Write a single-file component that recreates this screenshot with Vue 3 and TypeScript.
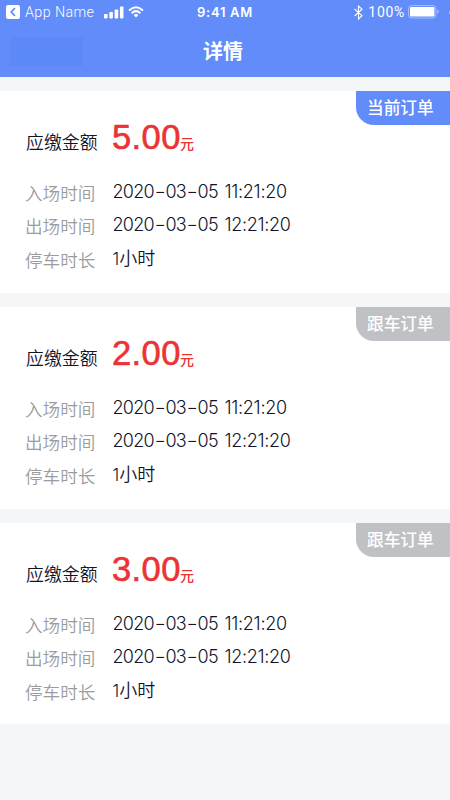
<script setup lang="ts">
interface Stamp {
  date: string[]
  time: string
}

interface Order {
  id: number
  tag: string
  current: boolean
  amount: string
  entry: Stamp
  exit: Stamp
  hours: number
}

const entry: Stamp = { date: ['2020', '03', '05'], time: '11:21:20' }
const exit: Stamp = { date: ['2020', '03', '05'], time: '12:21:20' }

const orders: Order[] = [
  { id: 1, tag: '当前订单', current: true, amount: '5.00', entry, exit, hours: 1 },
  { id: 2, tag: '跟车订单', current: false, amount: '2.00', entry, exit, hours: 1 },
  { id: 3, tag: '跟车订单', current: false, amount: '3.00', entry, exit, hours: 1 },
]
</script>

<template>
  <div class="page">
    <header class="header">
      <div class="status">
        <div class="status-left">
          <svg class="back" viewBox="0 0 14 14" width="14" height="14">
            <path fill-rule="evenodd" d="M2 0H12Q14 0 14 2V12Q14 14 12 14H2Q0 14 0 12V2Q0 0 2 0ZM8.4 2.6L4 7L8.4 11.4L9.6 10.3L6.3 7L9.6 3.7Z" fill="#fff" />
          </svg>
          <span class="app-name">App Name</span>
          <svg class="signal" viewBox="0 0 20 13" width="20" height="13" fill="#fff">
            <rect x="0" y="8" width="3.6" height="4.4" rx="0.8" />
            <rect x="5.3" y="6" width="3.6" height="6.4" rx="0.8" />
            <rect x="10.6" y="3.4" width="3.6" height="9" rx="0.8" />
            <rect x="15.9" y="0.6" width="3.6" height="11.8" rx="0.8" />
          </svg>
          <svg class="wifi" viewBox="0 0 16 12" width="16" height="12" fill="none" stroke="#fff" stroke-width="2">
            <path d="M1 4.4Q8 -2 15 4.4" />
            <path d="M3.6 7.2Q8 3.1 12.4 7.2" />
            <path d="M5.6 9Q8 7 10.4 9L8 11.5Z" fill="#fff" stroke="none" />
          </svg>
        </div>
        <span class="clock">9:41 AM</span>
        <div class="status-right">
          <svg class="bluetooth" viewBox="0 0 9 15" width="9" height="15" fill="none" stroke="#fff" stroke-width="1.1">
            <path d="M0.6 4L8 10.7L4.5 14V1L8 4.2L0.6 11" />
          </svg>
          <span class="percent">100%</span>
          <svg class="battery" viewBox="0 0 32 14" width="32" height="14">
            <rect x="0.6" y="0.6" width="27.2" height="12.4" rx="3" fill="none" stroke="#fff" stroke-opacity="0.45" />
            <rect x="2" y="2" width="24.4" height="9.6" rx="1.3" fill="#fff" />
            <path d="M29.2 4.6Q32.4 6.8 29.2 9Z" fill="#fff" fill-opacity="0.5" />
          </svg>
          <span class="edge-dot"></span>
        </div>
      </div>
      <div class="nav">
        <span class="nav-back"></span>
        <h1 class="title">详情</h1>
      </div>
    </header>

    <main class="orders">
      <section v-for="order in orders" :key="order.id" class="card">
        <span class="tag" :class="{ current: order.current }">{{ order.tag }}</span>
        <div class="amount-row">
          <span class="amount-label">应缴金额</span>
          <span class="amount">{{ order.amount }}</span>
          <span class="unit">元</span>
        </div>
        <div class="row">
          <span class="label">入场时间</span>
          <span class="date"><template v-for="(part, i) in order.entry.date" :key="i"><span v-if="i > 0" class="dash">-</span>{{ part }}</template></span>
          <span class="time">{{ order.entry.time }}</span>
        </div>
        <div class="row">
          <span class="label">出场时间</span>
          <span class="date"><template v-for="(part, i) in order.exit.date" :key="i"><span v-if="i > 0" class="dash">-</span>{{ part }}</template></span>
          <span class="time">{{ order.exit.time }}</span>
        </div>
        <div class="row">
          <span class="label">停车时长</span>
          <span class="duration"><span class="count">{{ order.hours }}</span>小时</span>
        </div>
      </section>
    </main>
  </div>
</template>

<style>
body {
  background: #f4f6f8;
}
</style>

<style scoped>
.page {
  width: 450px;
  height: 800px;
  overflow: hidden;
  background: #f4f6f8;
  color: #10142a;
  font-family: Inter, "Noto Sans CJK SC", sans-serif;
}

.header {
  height: 77px;
  background: #618cfa;
  color: #fff;
}

.status {
  display: grid;
  grid-template-columns: 1fr auto 1fr;
  align-items: center;
  height: 24px;
  padding: 0 0 0 6px;
  font-size: 14px;
  line-height: 24px;
}

.status-left,
.status-right {
  display: flex;
  align-items: center;
}

.status-right {
  justify-content: flex-end;
}

.app-name {
  margin-left: 5px;
  width: 79px;
  font-family: Roboto, sans-serif;
  font-weight: 300;
  font-size: 14.3px;
  letter-spacing: 0.4px;
  white-space: nowrap;
}

.wifi {
  margin-left: 4px;
}

.clock {
  margin-right: 6px;
  font-size: 13px;
  font-weight: 600;
  letter-spacing: 0.7px;
}

.percent {
  margin: 0 3px 0 5px;
  font-family: Roboto, sans-serif;
  font-size: 14px;
  letter-spacing: 0.7px;
}

.edge-dot {
  width: 1px;
  height: 3px;
  margin-left: 9px;
  background: #a0b9fc;
}

.nav {
  display: grid;
  grid-template-columns: 1fr auto 1fr;
  align-items: center;
  height: 53px;
  padding: 2px 14px 0 10px;
  box-sizing: border-box;
}

.nav-back {
  width: 73px;
  height: 29px;
  background: #5d88f7;
}

.title {
  margin: 0;
  font-size: 20px;
  line-height: 30px;
  font-weight: 700;
}

.orders {
  display: flex;
  flex-direction: column;
  gap: 14px;
  padding-top: 14px;
}

.card {
  position: relative;
  box-sizing: border-box;
  height: 202px;
  padding: 26px 0 0 25px;
  background: #fff;
}

.card:last-child {
  height: 201px;
}

.tag {
  position: absolute;
  top: 0;
  right: 0;
  box-sizing: border-box;
  width: 94px;
  height: 34px;
  padding-left: 11px;
  border-bottom-left-radius: 18px;
  background: #c0c1c5;
  color: #fff;
  font-size: 16.7px;
  font-weight: 500;
  line-height: 35px;
}

.tag.current {
  background: #618cfa;
}

.amount-row {
  display: flex;
  align-items: baseline;
  height: 60px;
  line-height: 40px;
  white-space: nowrap;
}

.amount-label {
  width: 86px;
  padding-left: 1px;
  font-size: 17.9px;
  font-weight: 350;
}

.amount {
  width: 68px;
  color: #ec3232;
  font-family: "Liberation Sans", sans-serif;
  font-size: 34.5px;
  letter-spacing: 0.4px;
  -webkit-text-stroke: 0.6px #ec3232;
}

.unit {
  color: #ec3232;
  font-size: 14px;
  font-weight: 500;
}

.row {
  display: flex;
  align-items: center;
  height: 33.6px;
  line-height: 34px;
  white-space: nowrap;
}

.label {
  width: 87.5px;
  color: #9a9ca0;
  font-size: 17.6px;
  font-weight: 350;
}

.date,
.time,
.duration {
  padding-bottom: 4px;
  font-size: 18px;
  font-weight: 350;
}

.date {
  width: 112px;
  letter-spacing: -0.75px;
}

.dash {
  display: inline-block;
  width: 11.6px;
  text-align: center;
  transform: scaleX(1.4);
}

.time {
  letter-spacing: -0.3px;
}

.count {
  font-size: 17px;
}
</style>
